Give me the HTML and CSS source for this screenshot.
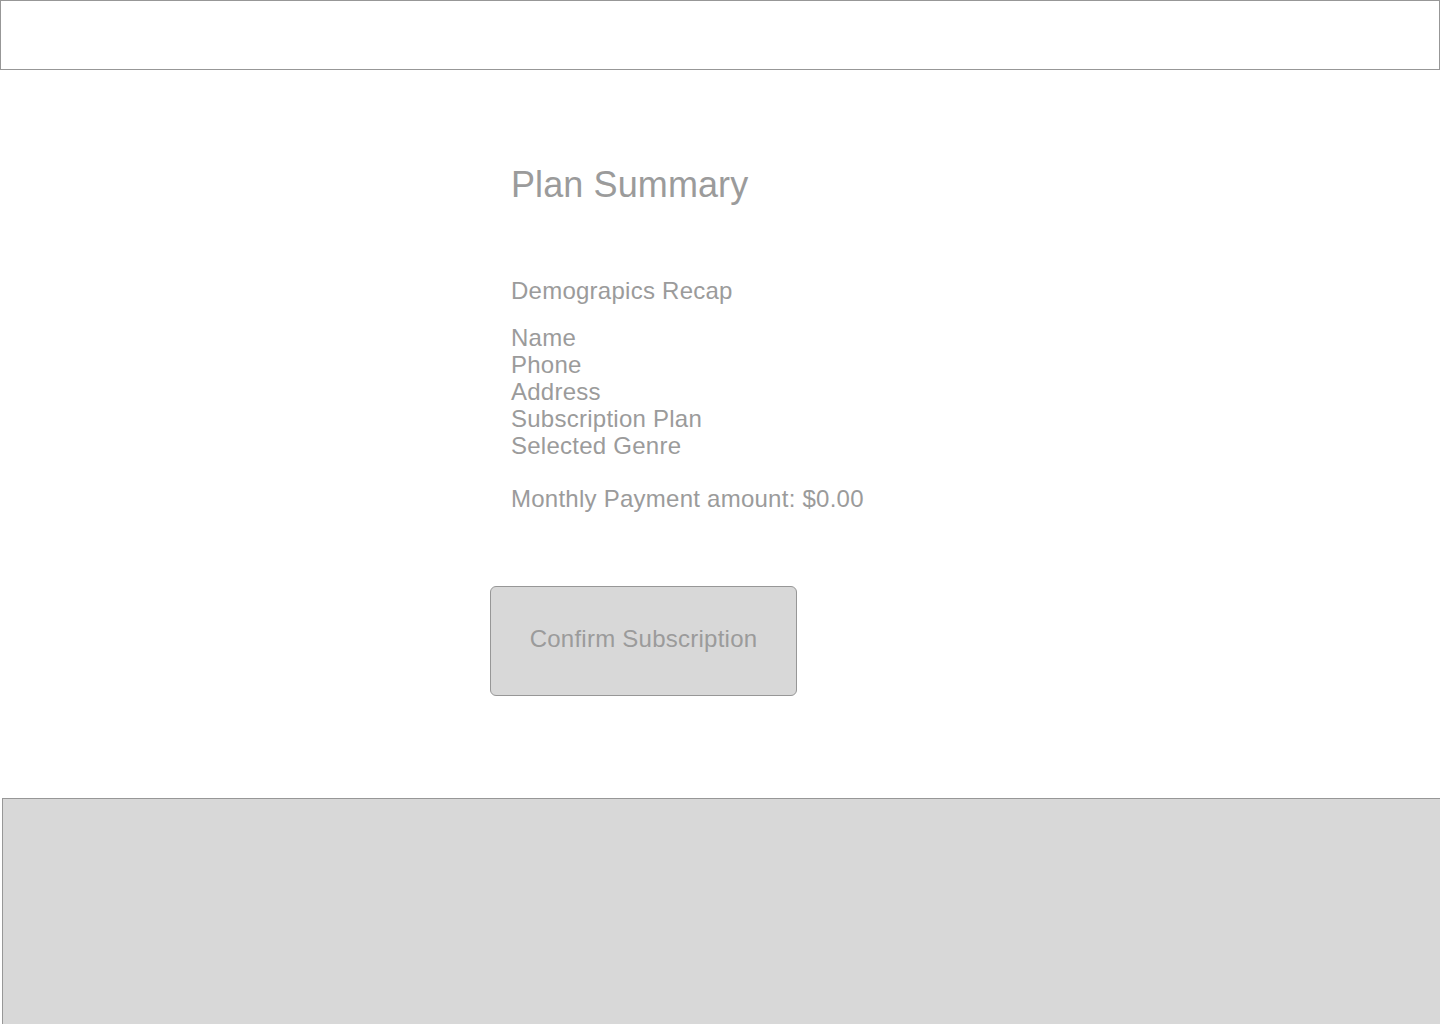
FILE: index.html
```html
<!DOCTYPE html>
<html lang="en">
<head>
<meta charset="utf-8">
<title>Plan Summary</title>
<link rel="stylesheet" href="styles.css">
</head>
<body>
<header class="topbar"></header>
<main class="content">
  <section class="summary">
    <h1 class="title">Plan Summary</h1>
    <h2 class="subtitle">Demograpics Recap</h2>
    <ul class="details">
      <li>Name</li>
      <li>Phone</li>
      <li>Address</li>
      <li>Subscription Plan</li>
      <li>Selected Genre</li>
    </ul>
    <p class="payment">Monthly Payment amount: $0.00</p>
  </section>
  <button class="confirm" type="button">Confirm Subscription</button>
</main>
<footer class="footer"></footer>
</body>
</html>
```

FILE: styles.css
```css
* { box-sizing: border-box; }

html, body {
  margin: 0;
  padding: 0;
  height: 1024px;
  overflow: hidden;
  background: #ffffff;
  font-family: "Liberation Sans", Arial, Helvetica, sans-serif;
  color: #9b9b9b;
}

.topbar {
  height: 70px;
  width: 1440px;
  border: 1px solid #979797;
  background: #ffffff;
}

.content {
  padding-left: 490px;
  padding-top: 94px;
  display: flex;
  flex-direction: column;
  align-items: flex-start;
}

.summary {
  padding-left: 21px;
  letter-spacing: 0.25px;
}

.title {
  margin: 0;
  font-size: 36px;
  line-height: 41px;
  font-weight: 400;
  letter-spacing: 0.1px;
  color: #9b9b9b;
}

.subtitle {
  margin: 72px 0 0;
  font-size: 24px;
  line-height: 27px;
  font-weight: 400;
  color: #9b9b9b;
}

.details {
  list-style: none;
  margin: 20px 0 0;
  padding: 0;
  font-size: 24px;
  line-height: 27px;
}

.payment {
  margin: 26px 0 0;
  font-size: 24px;
  line-height: 27px;
}

.confirm {
  margin-top: 74px;
  width: 307px;
  height: 110px;
  padding: 0 0 4px;
  background: #d8d8d8;
  border: 1px solid #979797;
  border-radius: 6px;
  font-family: "Liberation Sans", Arial, Helvetica, sans-serif;
  font-size: 24px;
  letter-spacing: 0.25px;
  color: #9b9b9b;
  cursor: pointer;
}

.footer {
  margin-top: 102px;
  margin-left: 2px;
  height: 226px;
  background: #d8d8d8;
  border-top: 1px solid #979797;
  border-left: 1px solid #979797;
}
```
